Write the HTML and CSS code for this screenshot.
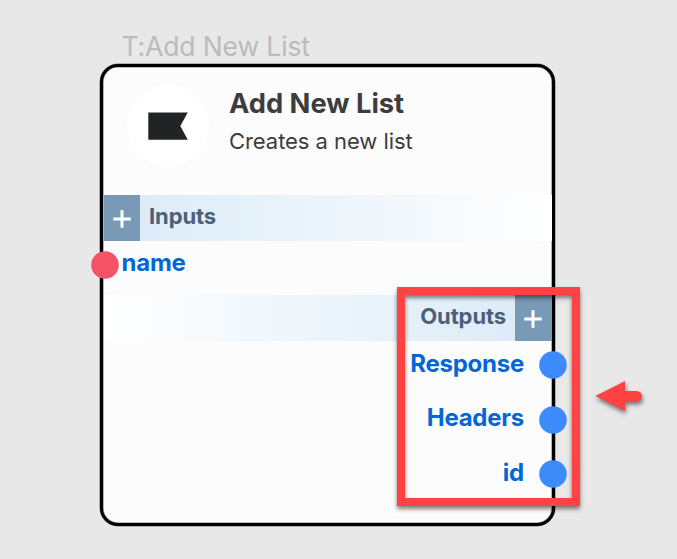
FILE: index.html
```html
<!DOCTYPE html>
<html lang="en">
<head>
<meta charset="utf-8">
<title>Add New List</title>
<link rel="stylesheet" href="styles.css">
</head>
<body>
<main class="canvas">
  <div class="node-label"><span>T:Add New List</span></div>
  <section class="node">
    <header class="node-head">
      <div class="avatar">
        <svg width="40" height="28" viewBox="0 0 40 28"><path d="M.3.4H39.8L32.3 14 39.8 27.8H.3Z" fill="#222325"/></svg>
      </div>
      <div class="heading">
        <h1>Add New List</h1>
        <p>Creates a new list</p>
      </div>
    </header>
    <div class="band band-in">
      <button class="add" aria-label="Add input"><svg width="18" height="18" viewBox="0 0 18 18"><path d="M9 .2V17.8M.2 9H17.8" stroke="#fff" stroke-width="3"/></svg></button>
      <span class="band-title">Inputs</span>
    </div>
    <div class="port port-in"><span class="port-name">name</span><svg class="dot" width="28" height="28"><circle cx="14" cy="14" r="13.8" fill="#f45367"/></svg></div>
    <div class="band band-out">
      <span class="band-title">Outputs</span>
      <button class="add" aria-label="Add output"><svg width="18" height="18" viewBox="0 0 18 18"><path d="M9 .2V17.8M.2 9H17.8" stroke="#fff" stroke-width="3"/></svg></button>
    </div>
    <div class="port port-out"><span class="port-name">Response</span><svg class="dot" width="28" height="28"><circle cx="14" cy="14" r="13.8" fill="#3d8bfb"/></svg></div>
    <div class="port port-out"><span class="port-name">Headers</span><svg class="dot" width="28" height="28"><circle cx="14" cy="14" r="13.8" fill="#3d8bfb"/></svg></div>
    <div class="port port-out"><span class="port-name">id</span><svg class="dot" width="28" height="28"><circle cx="14" cy="14" r="13.8" fill="#3d8bfb"/></svg></div>
  </section>
  <div class="highlight"></div>
  <svg class="arrow" width="60" height="46" viewBox="0 0 60 46"><path d="M5.3 16 35 1V11H46.8A5.2 5.2 0 0 1 46.8 21.4H35V31Z" fill="#ff4343"/></svg>
</main>
</body>
</html>
```
FILE: styles.css
```css
* { box-sizing: border-box; }
body {
  margin: 0;
  background: #e8e8e8;
  font-family: Inter, "Liberation Sans", sans-serif;
}
.canvas {
  position: relative;
  width: 677px;
  height: 559px;
  padding: 30px 0 0 100px;
  overflow: hidden;
}
.node-label {
  height: 34px;
  padding-left: 21.4px;
  font-size: 26.5px;
  letter-spacing: -.12px;
  line-height: 33px;
  color: #bbb;
  white-space: nowrap;
}
.node {
  width: 455px;
  height: 462px;
  border: 3px solid #000;
  border-radius: 18px;
  background: #fcfcfc;
  box-shadow: 0 0 0 .5px rgba(0, 0, 0, .5), inset 0 0 0 .6px rgba(0, 0, 0, .5);
}
.node-head {
  display: flex;
  height: 128px;
  padding: 18px 0 0 24.4px;
}
.avatar {
  display: flex;
  align-items: center;
  justify-content: center;
  width: 82px;
  height: 82px;
  border-radius: 50%;
  background: #fff;
}
.heading { padding-left: 19.6px; white-space: nowrap; }
h1 {
  margin: 1px 0 0;
  font-size: 27.3px;
  font-weight: 700;
  line-height: 36px;
  color: #3d3d3d;
}
p {
  margin: 4px 0 0;
  font-size: 22px;
  letter-spacing: -.05px;
  line-height: 30px;
  color: #3d3d3d;
}
.band {
  display: flex;
  height: 46px;
  margin: 0 0 0 1px;
}
.band-in { background: linear-gradient(90deg, #d9eaf7, #fff); }
.band-out { justify-content: flex-end; background: linear-gradient(270deg, #d9eaf7, #fff); }
.band-title {
  padding: 0 9px;
  font-size: 22px;
  font-weight: 700;
  letter-spacing: -.1px;
  line-height: 43px;
  color: #4c6079;
}
.add {
  display: flex;
  align-items: center;
  justify-content: center;
  width: 37px;
  height: 46px;
  padding: 2px 0 0;
  border: 0;
  background: #789ab6;
}
.band-in .add { width: 36px; }
.band-out .add { padding-right: 1px; }
.port {
  display: flex;
  align-items: center;
  position: relative;
  height: 54.6px;
  font-size: 24px;
  font-weight: 700;
  letter-spacing: -.25px;
  color: #0366d6;
}
.port-name { line-height: 30px; margin-bottom: 9px; }
.port-in { height: 54px; padding-left: 18.5px; }
.port-in .port-name { margin-bottom: 10px; }
.port-out { justify-content: flex-end; padding-right: 28px; }
.dot { position: absolute; }
.port-in .dot { left: -12px; top: 9.8px; }
.port-out .dot { right: -15px; top: 10px; }
.highlight {
  position: absolute;
  left: 397px;
  top: 287px;
  width: 183px;
  height: 219px;
  border: 8px solid #ff4343;
  filter: drop-shadow(0 3px 2px rgba(0, 0, 0, .5));
}
.arrow {
  position: absolute;
  left: 590px;
  top: 380px;
  filter: drop-shadow(1px 3px 2px rgba(0, 0, 0, .5));
}
```
